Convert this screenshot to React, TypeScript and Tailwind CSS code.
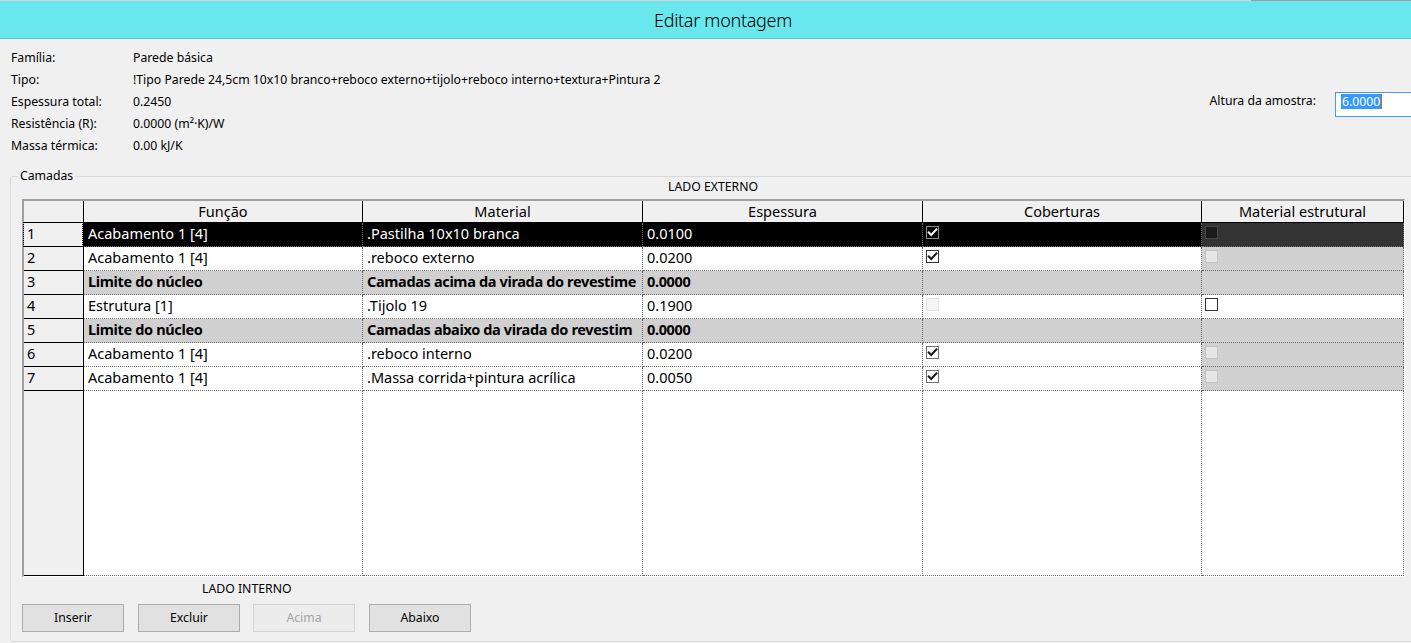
import React from 'react';

type Cb = 'checked' | 'checkedDark' | 'checkedSel' | 'dark' | 'disabled' | 'disabledWhite' | 'unchecked' | 'none';

function Check({ kind }: { kind: Cb }) {
  if (kind === 'none') return null;
  let box = '';
  let stroke = '';
  switch (kind) {
    case 'checked':
      box = 'bg-white border-[#6e6e6e]';
      stroke = '#1a1a1a';
      break;
    case 'checkedDark':
      box = 'bg-white border-[#333333]';
      stroke = '#1a1a1a';
      break;
    case 'checkedSel':
      box = 'bg-black border-[#8a8a8a]';
      stroke = '#f2f2f2';
      break;
    case 'dark':
      box = 'bg-[#1c1c1c] border-[#474747]';
      break;
    case 'disabled':
      box = 'bg-[#e6e6e6] border-[#c2c2c2]';
      break;
    case 'disabledWhite':
      box = 'bg-[#f5f5f5] border-[#e0e0e0]';
      break;
    case 'unchecked':
      box = 'bg-white border-[#333333]';
      break;
  }
  return (
    <div className={`w-[13px] h-[13px] border ${box} flex items-center justify-center shrink-0`}>
      {stroke && (
        <svg width="11" height="11" viewBox="0 0 11 11">
          <path d="M1.8 5.6 L4.2 8 L9.4 2.4" fill="none" stroke={stroke} strokeWidth="2.1" strokeLinecap="square" />
        </svg>
      )}
    </div>
  );
}

type Row = {
  n: number;
  f: string;
  m: string;
  e: string;
  cob: Cb;
  est: Cb;
  sel?: boolean;
  core?: boolean;
};

const rows: Row[] = [
  { n: 1, f: 'Acabamento 1 [4]', m: '.Pastilha 10x10 branca', e: '0.0100', cob: 'checkedSel', est: 'dark', sel: true },
  { n: 2, f: 'Acabamento 1 [4]', m: '.reboco externo', e: '0.0200', cob: 'checkedDark', est: 'disabled' },
  { n: 3, f: 'Limite do núcleo', m: 'Camadas acima da virada do revestime', e: '0.0000', cob: 'none', est: 'none', core: true },
  { n: 4, f: 'Estrutura [1]', m: '.Tijolo 19', e: '0.1900', cob: 'disabledWhite', est: 'unchecked' },
  { n: 5, f: 'Limite do núcleo', m: 'Camadas abaixo da virada do revestim', e: '0.0000', cob: 'none', est: 'none', core: true },
  { n: 6, f: 'Acabamento 1 [4]', m: '.reboco interno', e: '0.0200', cob: 'checked', est: 'disabled' },
  { n: 7, f: 'Acabamento 1 [4]', m: '.Massa corrida+pintura acrílica', e: '0.0050', cob: 'checked', est: 'disabled' },
];

const info: [string, string][] = [
  ['Família:', 'Parede básica'],
  ['Tipo:', '!Tipo Parede 24,5cm 10x10 branco+reboco externo+tijolo+reboco interno+textura+Pintura 2'],
  ['Espessura total:', '0.2450'],
  ['Resistência (R):', '0.0000 (m²·K)/W'],
  ['Massa térmica:', '0.00 kJ/K'],
];

const headers = ['Função', 'Material', 'Espessura', 'Coberturas', 'Material estrutural'];

const dataBase =
  'border-r border-b border-dotted border-[#6a6a6a] flex items-center overflow-hidden whitespace-nowrap px-[4px] pb-[1px]';
const cbBase = 'border-r border-b border-dotted border-[#6a6a6a] flex items-start pt-[3px] px-[3px]';

export default function App() {
  return (
    <div
      className="w-[1411px] h-[643px] bg-[#f0f0f0] overflow-hidden flex flex-col text-black"
      style={{ fontFamily: '"Noto Sans", "Open Sans", sans-serif' }}
    >
      {/* top strip */}
      <div className="h-[1px] flex">
        <div className="flex-1 bg-[#d4d4d4]" />
        <div className="w-[160px] bg-[#9c9c9c]" />
      </div>
      {/* title bar */}
      <div className="h-[38px] bg-[#68e7ed] border-b border-[#58c6ce] flex items-center justify-center pl-[35px]">
        <span className="text-[18px] font-light leading-none tracking-[-0.3px]">Editar montagem</span>
      </div>

      {/* info */}
      <div className="flex pt-[8px] pl-[11px] text-[12.25px]">
        <div className="grid grid-cols-[122px_auto]">
          {info.map(([k, v]) => (
            <React.Fragment key={k}>
              <div className="h-[22px] leading-[22px]">{k}</div>
              <div className="h-[22px] leading-[22px] whitespace-nowrap">{v}</div>
            </React.Fragment>
          ))}
        </div>
        <div className="ml-auto mr-[-10px] mt-[43px] flex items-start gap-[19px]">
          <div className="h-[22px] leading-[22px]">Altura da amostra:</div>
          <div className="mt-[2px] w-[86px] h-[25px] bg-white border border-[#4d98e6] pl-[5px] pt-[1px] flex items-start">
            <span className="bg-[#3399ff] text-white leading-[15px] h-[15px] px-[1px]">6.0000</span>
            <span className="w-[1px] h-[15px] bg-[#d46a00]" />
          </div>
        </div>
      </div>

      {/* group box */}
      <div className="mt-[19px] ml-[10px] mr-[-10px] h-[466px] border border-[#d9d9d9] rounded-[3px] relative pl-[11px] pt-[1px]">
        <div className="absolute left-[7px] -top-[9px] px-[2px] bg-[#f0f0f0] text-[12.25px] leading-[16px]">Camadas</div>

        <div className="w-[1382px] h-[18px] leading-[18px] text-[12.25px] text-center mb-[3px]">LADO EXTERNO</div>

        {/* table */}
        <div className="w-[1383px] border-t-2 border-l-2 border-[#a0a0a0] border-b border-r border-b-white border-r-white text-[14.5px]">
          <div className="grid grid-cols-[60px_279px_280px_280px_279px_202px] grid-rows-[22px_repeat(7,24px)_185px]">
            <div className="bg-[#f0f0f0] border-r border-b border-black" />
            {headers.map((h) => (
              <div
                key={h}
                className="bg-[#f0f0f0] border-r border-b border-black flex items-center justify-center whitespace-nowrap"
              >
                {h}
              </div>
            ))}

            {rows.map((r) => {
              const rowBg = r.sel
                ? 'bg-black text-white'
                : r.core
                ? 'bg-[#d0d0d0] font-bold tracking-[-0.35px]'
                : 'bg-white';
              const estBg = r.sel ? 'bg-[#333333]' : r.core || r.est === 'disabled' ? 'bg-[#d0d0d0]' : 'bg-white';
              return (
                <React.Fragment key={r.n}>
                  <div className="relative bg-[#f0f0f0] border-r border-b border-black flex items-center pl-[3px] pb-[1px]">
                    {r.n}
                    {r.sel && <span className="absolute -left-[1px] -top-[1px] right-0 bottom-[-1px] border border-dotted border-black" />}
                  </div>
                  <div className={`${dataBase} ${rowBg}`}>{r.f}</div>
                  <div className={`${dataBase} ${rowBg}`}>{r.m}</div>
                  <div className={`${dataBase} ${rowBg}`}>{r.e}</div>
                  <div className={`${cbBase} ${rowBg}`}>
                    <Check kind={r.cob} />
                  </div>
                  <div className={`${cbBase} ${estBg}`}>
                    <Check kind={r.est} />
                  </div>
                </React.Fragment>
              );
            })}

            <div className="bg-[#f0f0f0] border-r border-b border-black" />
            <div className="bg-white border-r border-b border-dotted border-[#6a6a6a]" />
            <div className="bg-white border-r border-b border-dotted border-[#6a6a6a]" />
            <div className="bg-white border-r border-b border-dotted border-[#6a6a6a]" />
            <div className="bg-white border-r border-b border-dotted border-[#6a6a6a]" />
            <div className="bg-white border-r border-b border-dotted border-[#6a6a6a]" />
          </div>
        </div>

        <div className="mt-[3px] h-[18px] leading-[18px] text-[12.25px] pl-[180px]">LADO INTERNO</div>

        <div className="mt-[6px] flex text-[12.25px]">
          <button className="w-[102px] h-[28px] bg-[#e1e1e1] border border-[#adadad]">Inserir</button>
          <button className="ml-[14px] w-[102px] h-[28px] bg-[#e1e1e1] border border-[#adadad]">Excluir</button>
          <button className="ml-[13px] w-[102px] h-[28px] bg-[#ececec] border border-[#d3d3d3] text-[#a3a3a3]">Acima</button>
          <button className="ml-[14px] w-[102px] h-[28px] bg-[#e1e1e1] border border-[#adadad]">Abaixo</button>
        </div>
      </div>
    </div>
  );
}
